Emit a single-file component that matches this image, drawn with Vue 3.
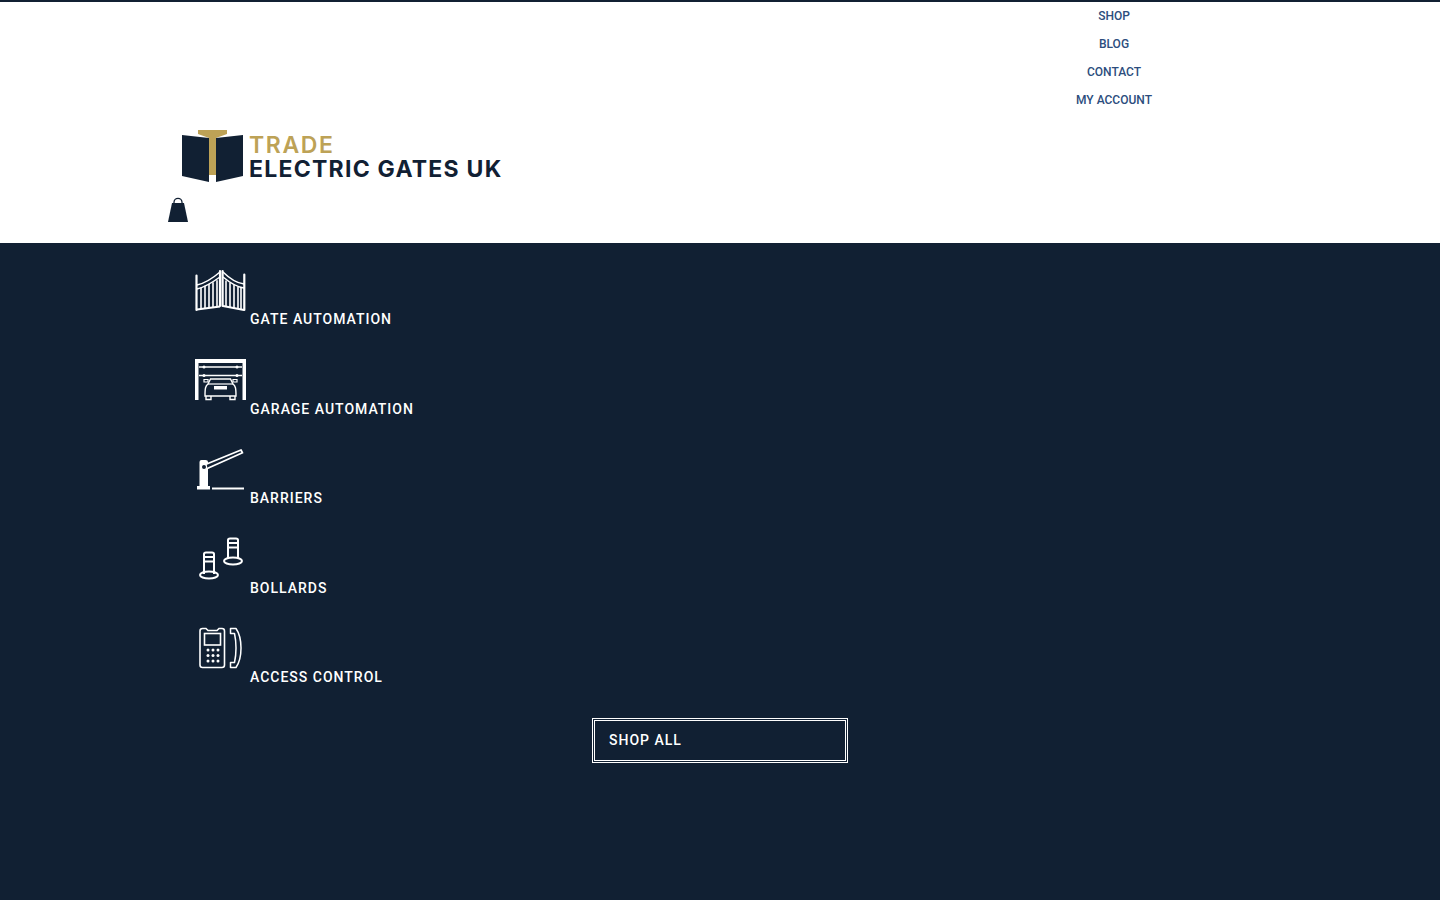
<script setup>
const links = ['SHOP', 'BLOG', 'CONTACT', 'MY ACCOUNT']
const items = [
  { key: 'gate', label: 'GATE AUTOMATION' },
  { key: 'garage', label: 'GARAGE AUTOMATION' },
  { key: 'barrier', label: 'BARRIERS' },
  { key: 'bollard', label: 'BOLLARDS' },
  { key: 'access', label: 'ACCESS CONTROL' }
]
const bars = [6, 10, 14, 18, 22, 31, 35, 39, 43, 46]
const dots = [9, 14, 19].flatMap(x => [23, 28.5, 34].map(y => ({ x, y })))
</script>

<template>
  <div class="page">
    <header class="header">
      <nav class="topnav">
        <a v-for="l in links" :key="l" class="toplink">{{ l }}</a>
      </nav>
      <div class="logo">
        <svg class="logomark" viewBox="0 0 62 55" width="62" height="55">
          <path d="M16 1H45V5L34 9V46H27V9L16 5Z" fill="#bda256" />
          <path d="M0 6L27 9V53L0 47Z" fill="#112033" />
          <path d="M61 6L34 9V53L61 47Z" fill="#112033" />
        </svg>
        <div class="logotext">
          <span class="trade">TRADE</span>
          <span class="egates">ELECTRIC GATES UK</span>
        </div>
      </div>
      <svg class="bag" viewBox="0 0 20 25" width="20" height="25">
        <path d="M6 8V5.3a4 4 0 0 1 8 0V8" fill="none" stroke="#112033" stroke-width="1.3" />
        <path d="M4 6H16L20 25H0Z" fill="#112033" />
      </svg>
    </header>
    <main class="main">
      <ul class="menu">
        <li v-for="it in items" :key="it.key" class="row">
          <svg class="icon" viewBox="0 0 51 42" width="51" height="42" fill="none" stroke="#fff">
            <template v-if="it.key === 'gate'">
              <path d="M1.5 5.5V40M49.3 4.5V40M25 1V36M27.6 1V36" stroke-width="2.2" stroke-linecap="round" />
              <path d="M2 15C11 13 18 8 25 2M2 19C11 17 18 12 25 7M28 2C34 8 41 13 49 14M28 7C34 12 41 17 49 18" stroke-width="1.5" />
              <path d="M2 39.5L25 36.5M28 36L49 40" stroke-width="2" />
              <path v-for="x in bars" :key="x" :d="`M${x} ${x < 25 ? 18 - (x - 5) * 0.45 : 10 + (x - 30) * 0.5}V${x < 25 ? 39 - (x - 5) * 0.12 : 36.5 + (x - 30) * 0.2}`" stroke-width="1.6" />
            </template>
            <template v-else-if="it.key === 'garage'">
              <path d="M0 0H51V41H47.5V4H3.5V41H0Z" fill="#fff" stroke="none" />
              <path d="M4 8H47M4 16.5H47" stroke-width="1.6" />
              <circle cx="9" cy="8" r="1.5" fill="#fff" stroke="none" />
              <circle cx="42" cy="8" r="1.5" fill="#fff" stroke="none" />
              <circle cx="9" cy="16.5" r="1.5" fill="#fff" stroke="none" />
              <circle cx="42" cy="16.5" r="1.5" fill="#fff" stroke="none" />
              <path d="M13 25L15.5 20H35.5L38 25C40.5 27 41 29 41 37H10C10 29 10.5 27 13 25Z" stroke-width="1.4" />
              <path d="M13 25H38" stroke-width="1.2" />
              <path d="M9 20.5H13V23H9ZM38 20.5H42V23H38Z" stroke-width="1.2" />
              <path d="M11 37V40.5H16V37M35 37V40.5H40V37" stroke-width="1.4" />
              <rect x="19" y="27" width="13" height="3.5" fill="#fff" stroke="none" />
            </template>
            <template v-else-if="it.key === 'barrier'">
              <path d="M4.5 13Q4.5 11 6.5 11H10.5Q13 11 13 13V37H15V40.5H2V37H4.5Z" fill="#fff" stroke="none" />
              <path d="M17 39.5H49" stroke-width="2" />
              <path d="M8 16.5L46 1L47.5 3.8L10 20.5Z" fill="#112033" stroke-width="1.8" stroke-linejoin="round" />
              <circle cx="9" cy="18" r="2.6" fill="#112033" stroke-width="1.2" />
            </template>
            <template v-else-if="it.key === 'bollard'">
              <path d="M33 21V2Q33 0.5 35 0.5H41Q43 0.5 43 2V21" stroke-width="2" />
              <path d="M33.5 5H42.5M33.5 9.5H42.5" stroke-width="2" />
              <ellipse cx="38" cy="23" rx="9" ry="3.5" stroke-width="2" />
              <path d="M9 36V16Q9 14.5 11 14.5H17Q19 14.5 19 16V36" stroke-width="2" />
              <path d="M9.5 19H18.5M9.5 23.5H18.5" stroke-width="2" />
              <ellipse cx="14" cy="37" rx="9" ry="3.5" stroke-width="2" />
            </template>
            <template v-else>
              <g transform="translate(0 -1)">
                <path d="M7.5 1.5H11L13 3.5H22L24 1.5H27Q29.5 1.5 29.5 4V38Q29.5 40.5 27 40.5H7.5Q5 40.5 5 38V4Q5 1.5 7.5 1.5Z" stroke-width="1.6" />
                <rect x="9.5" y="6.5" width="16" height="11.5" stroke-width="1.6" />
                <circle v-for="d in dots" :key="`${d.x}-${d.y}`" :cx="d.x + 4" :cy="d.y" r="1.5" fill="#fff" stroke="none" />
                <path d="M35.5 1.5H41C45.5 8 46 14 46 21C46 28 45.5 34 41 40.5H35.5V35.5H39.5C40.5 31 41 27 41 21C41 15 40.5 11 39.5 6.5H35.5Z" stroke-width="1.5" stroke-linejoin="round" />
              </g>
            </template>
          </svg>
          <span class="label">{{ it.label }}</span>
        </li>
      </ul>
      <div class="actions">
        <a class="shopall">SHOP ALL</a>
      </div>
    </main>
  </div>
</template>

<style>
html, body { margin: 0; background: #112033; }
</style>

<style scoped>
.page {
  width: 1440px;
  height: 900px;
  overflow: hidden;
  background: #112033;
  font-family: Roboto, sans-serif;
}
.header {
  height: 241px;
  background: #fff;
  border-top: 2px solid #112033;
  display: flex;
  flex-direction: column;
}
.topnav {
  display: flex;
  flex-direction: column;
  align-items: center;
  align-self: flex-end;
  margin-right: 288px;
  width: 76px;
}
.toplink {
  font-weight: 500;
  font-size: 12px;
  line-height: 28px;
  color: #2c4d7d;
  white-space: nowrap;
}
.logo {
  display: flex;
  align-items: flex-start;
  margin: 15px 0 0 182px;
  height: 55px;
}
.logomark { flex: none; overflow: visible; }
.logotext {
  display: flex;
  flex-direction: column;
  margin-left: 5px;
  padding-top: 5px;
  font-family: Inter, sans-serif;
  line-height: 23.5px;
}
.trade {
  font-size: 23px;
  font-weight: 600;
  letter-spacing: 1.6px;
  color: #bda256;
}
.egates {
  font-size: 23px;
  font-weight: 700;
  letter-spacing: 1.25px;
  color: #112033;
  white-space: nowrap;
}
.bag { margin: 13px 0 0 168px; display: block; }
.main {
  display: flex;
  flex-direction: column;
}
.menu {
  list-style: none;
  margin: 0;
  padding: 27px 0 0 195px;
}
.row {
  display: flex;
  align-items: flex-start;
  height: 89.5px;
}
.icon { flex: none; display: block; margin-top: -0.5px; overflow: visible; }
.label {
  margin-left: 4px;
  padding-top: 39px;
  font-size: 14px;
  font-weight: 500;
  line-height: 20px;
  letter-spacing: 1px;
  color: #fff;
  white-space: nowrap;
}
.actions {
  display: flex;
  justify-content: center;
}
.shopall {
  box-sizing: border-box;
  width: 256px;
  height: 45px;
  padding-left: 14px;
  border: 3px double #fff;
  font-size: 14px;
  font-weight: 500;
  line-height: 38px;
  letter-spacing: 1px;
  color: #fff;
}
</style>
